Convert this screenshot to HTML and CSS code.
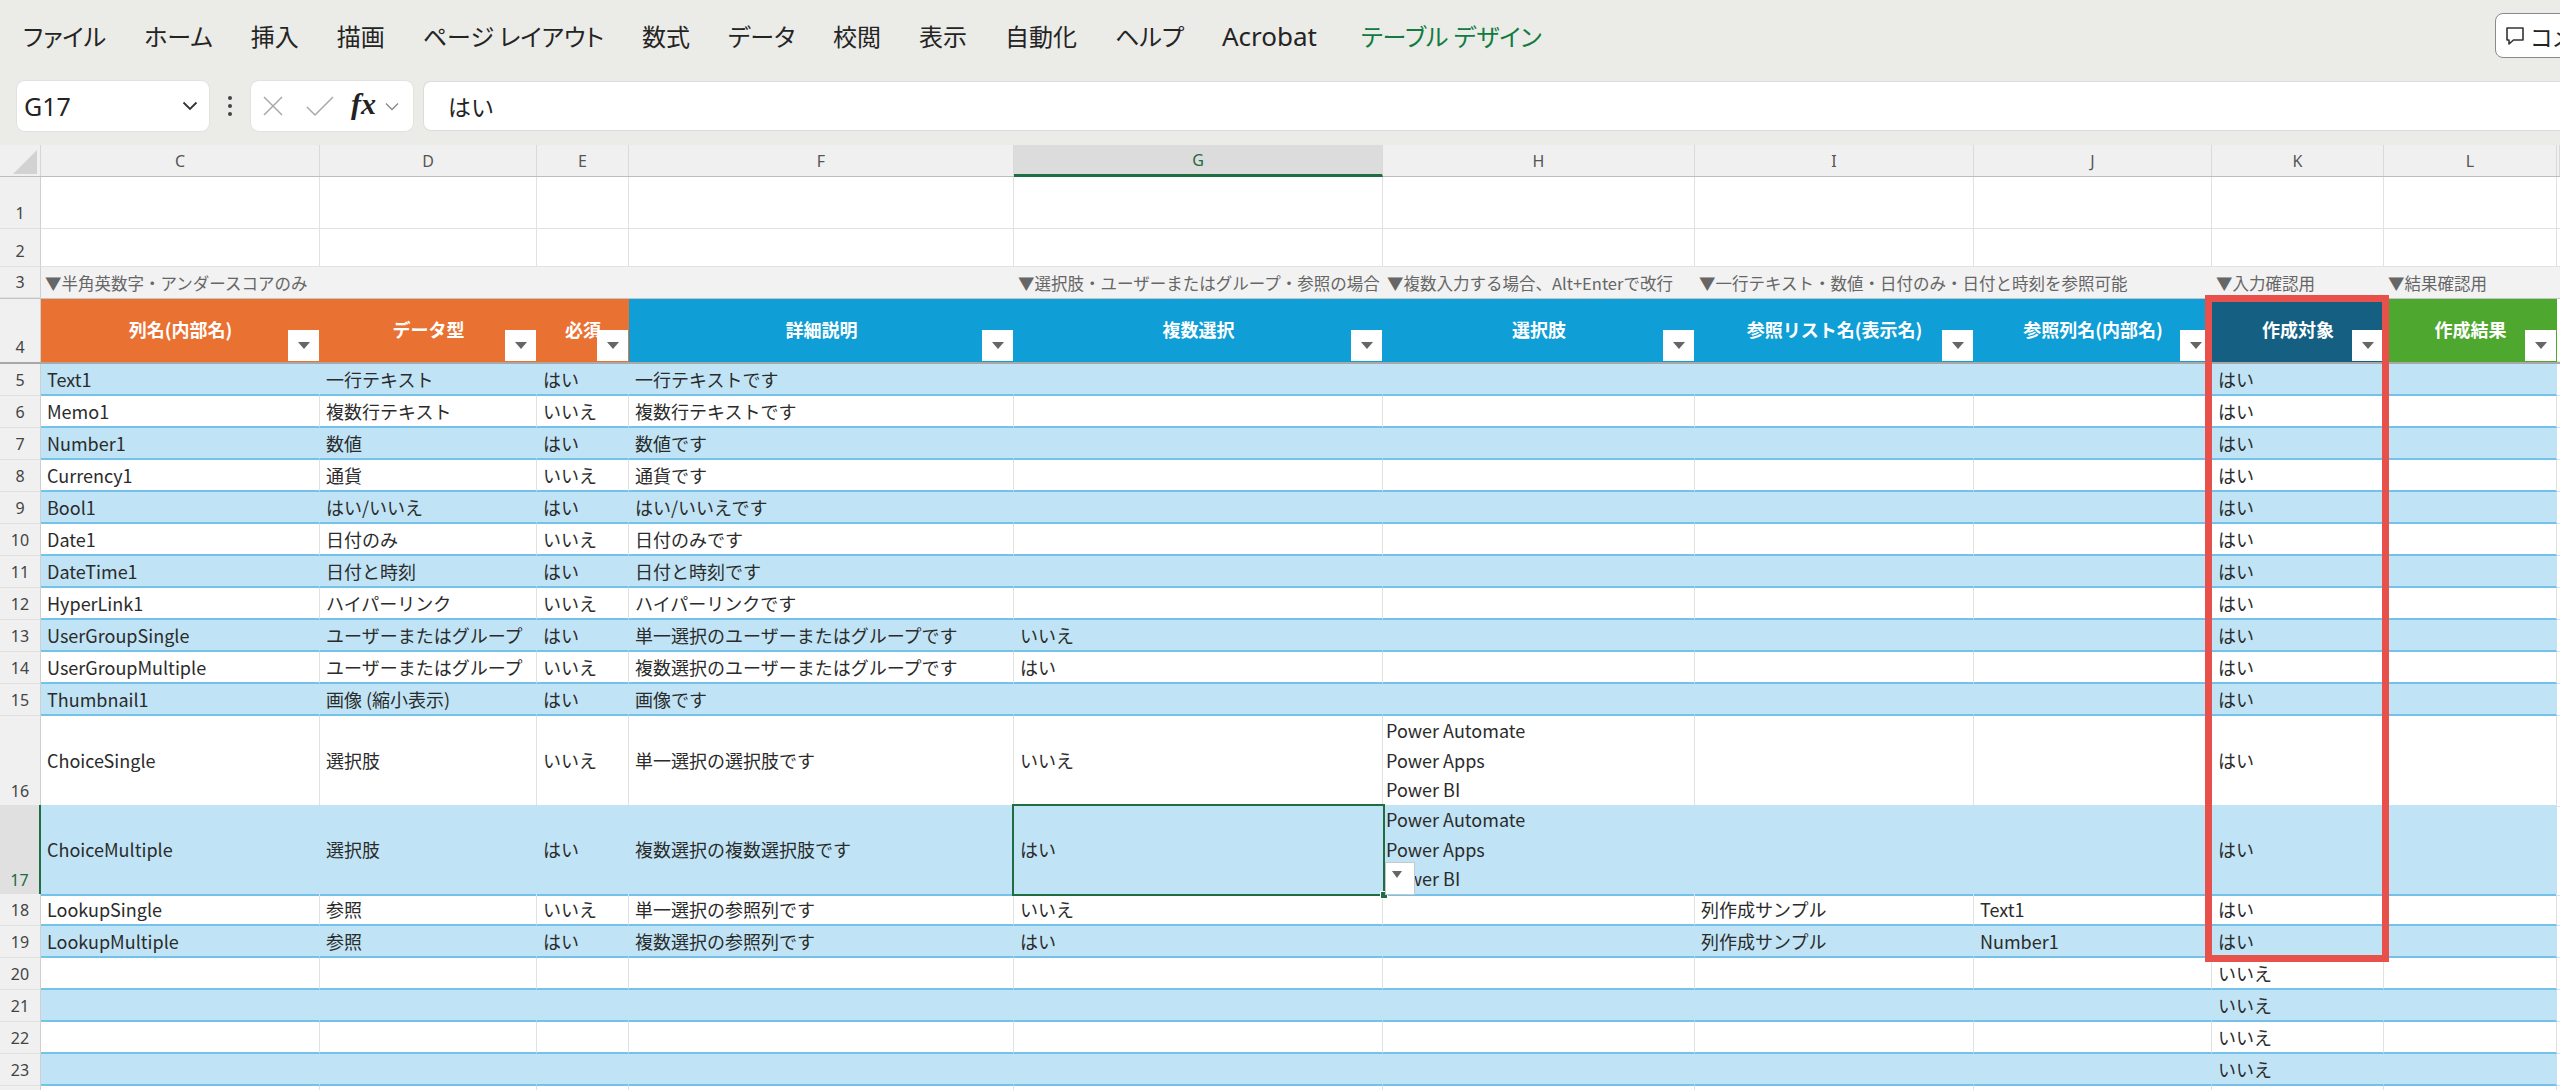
FILE: index.html
```html
<!DOCTYPE html>
<html lang="ja">
<head>
<meta charset="utf-8">
<title>Excel</title>
<link rel="stylesheet" href="styles.css">
</head>
<body>
<div class="menubar">
  <nav class="tabs">
    <span class="tab">ファイル</span>
    <span class="tab">ホーム</span>
    <span class="tab">挿入</span>
    <span class="tab">描画</span>
    <span class="tab">ページ レイアウト</span>
    <span class="tab">数式</span>
    <span class="tab">データ</span>
    <span class="tab">校閲</span>
    <span class="tab">表示</span>
    <span class="tab">自動化</span>
    <span class="tab">ヘルプ</span>
    <span class="tab latin">Acrobat</span>
    <span class="tab accent">テーブル デザイン</span>
  </nav>
  <div class="comment">
    <svg class="cmt-icon" width="22" height="22" viewBox="0 0 22 22"><path d="M3 3h16v12H9.5L5 19v-4H3z" fill="none" stroke="#333" stroke-width="1.6" stroke-linejoin="round"/></svg>
    <span>コメント</span>
  </div>
</div>

<div class="formulabar">
  <div class="namebox">
    <span class="ref">G17</span>
    <svg width="16" height="10" viewBox="0 0 16 10"><path d="M1.5 1.5l6.5 6.5 6.5-6.5" fill="none" stroke="#333" stroke-width="1.8"/></svg>
  </div>
  <div class="dots"><i></i><i></i><i></i></div>
  <div class="fxbox">
    <svg class="ic-x" width="24" height="24" viewBox="0 0 24 24"><path d="M3 3l18 18M21 3L3 21" stroke="#a8a8a8" stroke-width="1.5"/></svg>
    <svg class="ic-ok" width="30" height="24" viewBox="0 0 30 24"><path d="M2 13l8 8L28 3" fill="none" stroke="#a8a8a8" stroke-width="1.5"/></svg>
    <span class="fx">fx</span>
    <svg class="ic-dd" width="14" height="9" viewBox="0 0 14 9"><path d="M1 1.5l6 6 6-6" fill="none" stroke="#8a8a8a" stroke-width="1.4"/></svg>
  </div>
  <div class="formula">はい</div>
</div>

<div class="sheet">
  <div class="row colhdr">
    <div class="corner"><span class="tri"></span></div>
    <div class="ch">C</div><div class="ch">D</div><div class="ch">E</div><div class="ch">F</div>
    <div class="ch sel">G</div><div class="ch">H</div><div class="ch">I</div><div class="ch">J</div>
    <div class="ch">K</div><div class="ch">L</div><div class="ch"></div>
  </div>

  <div class="row r1">
    <div class="rh">1</div>
    <div class="c"></div><div class="c"></div><div class="c"></div><div class="c"></div><div class="c"></div><div class="c"></div><div class="c"></div><div class="c"></div><div class="c"></div><div class="c"></div><div class="c"></div>
  </div>
  <div class="row r2">
    <div class="rh">2</div>
    <div class="c"></div><div class="c"></div><div class="c"></div><div class="c"></div><div class="c"></div><div class="c"></div><div class="c"></div><div class="c"></div><div class="c"></div><div class="c"></div><div class="c"></div>
  </div>
  <div class="row r3 notes">
    <div class="rh">3</div>
    <div class="n">▼半角英数字・アンダースコアのみ</div><div class="n"></div><div class="n"></div><div class="n"></div>
    <div class="n">▼選択肢・ユーザーまたはグループ・参照の場合</div>
    <div class="n">▼複数入力する場合、Alt+Enterで改行</div>
    <div class="n">▼一行テキスト・数値・日付のみ・日付と時刻を参照可能</div>
    <div class="n"></div>
    <div class="n">▼入力確認用</div>
    <div class="n">▼結果確認用</div>
    <div class="n"></div>
  </div>
  <div class="row r4 thead">
    <div class="rh">4</div>
    <div class="hc or">列名(内部名)<span class="fb"></span></div>
    <div class="hc or">データ型<span class="fb"></span></div>
    <div class="hc or">必須<span class="fb"></span></div>
    <div class="hc bl">詳細説明<span class="fb"></span></div>
    <div class="hc bl">複数選択<span class="fb"></span></div>
    <div class="hc bl">選択肢<span class="fb"></span></div>
    <div class="hc bl">参照リスト名(表示名)<span class="fb"></span></div>
    <div class="hc bl">参照列名(内部名)<span class="fb"></span></div>
    <div class="hc dk">作成対象<span class="fb"></span></div>
    <div class="hc gr">作成結果<span class="fb"></span></div>
    <div class="c"></div>
  </div>

  <div class="row tr band">
    <div class="rh">5</div>
    <div class="c">Text1</div><div class="c">一行テキスト</div><div class="c">はい</div><div class="c">一行テキストです</div><div class="c"></div><div class="c"></div><div class="c"></div><div class="c"></div><div class="c">はい</div><div class="c"></div><div class="m"></div>
  </div>
  <div class="row tr">
    <div class="rh">6</div>
    <div class="c">Memo1</div><div class="c">複数行テキスト</div><div class="c">いいえ</div><div class="c">複数行テキストです</div><div class="c"></div><div class="c"></div><div class="c"></div><div class="c"></div><div class="c">はい</div><div class="c"></div><div class="m"></div>
  </div>
  <div class="row tr band">
    <div class="rh">7</div>
    <div class="c">Number1</div><div class="c">数値</div><div class="c">はい</div><div class="c">数値です</div><div class="c"></div><div class="c"></div><div class="c"></div><div class="c"></div><div class="c">はい</div><div class="c"></div><div class="m"></div>
  </div>
  <div class="row tr">
    <div class="rh">8</div>
    <div class="c">Currency1</div><div class="c">通貨</div><div class="c">いいえ</div><div class="c">通貨です</div><div class="c"></div><div class="c"></div><div class="c"></div><div class="c"></div><div class="c">はい</div><div class="c"></div><div class="m"></div>
  </div>
  <div class="row tr band">
    <div class="rh">9</div>
    <div class="c">Bool1</div><div class="c">はい/いいえ</div><div class="c">はい</div><div class="c">はい/いいえです</div><div class="c"></div><div class="c"></div><div class="c"></div><div class="c"></div><div class="c">はい</div><div class="c"></div><div class="m"></div>
  </div>
  <div class="row tr">
    <div class="rh">10</div>
    <div class="c">Date1</div><div class="c">日付のみ</div><div class="c">いいえ</div><div class="c">日付のみです</div><div class="c"></div><div class="c"></div><div class="c"></div><div class="c"></div><div class="c">はい</div><div class="c"></div><div class="m"></div>
  </div>
  <div class="row tr band">
    <div class="rh">11</div>
    <div class="c">DateTime1</div><div class="c">日付と時刻</div><div class="c">はい</div><div class="c">日付と時刻です</div><div class="c"></div><div class="c"></div><div class="c"></div><div class="c"></div><div class="c">はい</div><div class="c"></div><div class="m"></div>
  </div>
  <div class="row tr">
    <div class="rh">12</div>
    <div class="c">HyperLink1</div><div class="c">ハイパーリンク</div><div class="c">いいえ</div><div class="c">ハイパーリンクです</div><div class="c"></div><div class="c"></div><div class="c"></div><div class="c"></div><div class="c">はい</div><div class="c"></div><div class="m"></div>
  </div>
  <div class="row tr band">
    <div class="rh">13</div>
    <div class="c">UserGroupSingle</div><div class="c">ユーザーまたはグループ</div><div class="c">はい</div><div class="c">単一選択のユーザーまたはグループです</div><div class="c">いいえ</div><div class="c"></div><div class="c"></div><div class="c"></div><div class="c">はい</div><div class="c"></div><div class="m"></div>
  </div>
  <div class="row tr">
    <div class="rh">14</div>
    <div class="c">UserGroupMultiple</div><div class="c">ユーザーまたはグループ</div><div class="c">いいえ</div><div class="c">複数選択のユーザーまたはグループです</div><div class="c">はい</div><div class="c"></div><div class="c"></div><div class="c"></div><div class="c">はい</div><div class="c"></div><div class="m"></div>
  </div>
  <div class="row tr band">
    <div class="rh">15</div>
    <div class="c">Thumbnail1</div><div class="c">画像 (縮小表示)</div><div class="c">はい</div><div class="c">画像です</div><div class="c"></div><div class="c"></div><div class="c"></div><div class="c"></div><div class="c">はい</div><div class="c"></div><div class="m"></div>
  </div>
  <div class="row tr tall">
    <div class="rh">16</div>
    <div class="c">ChoiceSingle</div><div class="c">選択肢</div><div class="c">いいえ</div><div class="c">単一選択の選択肢です</div><div class="c">いいえ</div>
    <div class="c multi">Power Automate<br>Power Apps<br>Power BI</div>
    <div class="c"></div><div class="c"></div><div class="c">はい</div><div class="c"></div><div class="m"></div>
  </div>
  <div class="row tr tall band">
    <div class="rh sel">17</div>
    <div class="c">ChoiceMultiple</div><div class="c">選択肢</div><div class="c">はい</div><div class="c">複数選択の複数選択肢です</div><div class="c">はい</div>
    <div class="c multi">Power Automate<br>Power Apps<br>Power BI</div>
    <div class="c"></div><div class="c"></div><div class="c">はい</div><div class="c"></div><div class="m"></div>
  </div>
  <div class="row tr">
    <div class="rh">18</div>
    <div class="c">LookupSingle</div><div class="c">参照</div><div class="c">いいえ</div><div class="c">単一選択の参照列です</div><div class="c">いいえ</div><div class="c"></div><div class="c">列作成サンプル</div><div class="c">Text1</div><div class="c">はい</div><div class="c"></div><div class="m"></div>
  </div>
  <div class="row tr band">
    <div class="rh">19</div>
    <div class="c">LookupMultiple</div><div class="c">参照</div><div class="c">はい</div><div class="c">複数選択の参照列です</div><div class="c">はい</div><div class="c"></div><div class="c">列作成サンプル</div><div class="c">Number1</div><div class="c">はい</div><div class="c"></div><div class="m"></div>
  </div>
  <div class="row tr">
    <div class="rh">20</div>
    <div class="c"></div><div class="c"></div><div class="c"></div><div class="c"></div><div class="c"></div><div class="c"></div><div class="c"></div><div class="c"></div><div class="c">いいえ</div><div class="c"></div><div class="m"></div>
  </div>
  <div class="row tr band">
    <div class="rh">21</div>
    <div class="c"></div><div class="c"></div><div class="c"></div><div class="c"></div><div class="c"></div><div class="c"></div><div class="c"></div><div class="c"></div><div class="c">いいえ</div><div class="c"></div><div class="m"></div>
  </div>
  <div class="row tr">
    <div class="rh">22</div>
    <div class="c"></div><div class="c"></div><div class="c"></div><div class="c"></div><div class="c"></div><div class="c"></div><div class="c"></div><div class="c"></div><div class="c">いいえ</div><div class="c"></div><div class="m"></div>
  </div>
  <div class="row tr band">
    <div class="rh">23</div>
    <div class="c"></div><div class="c"></div><div class="c"></div><div class="c"></div><div class="c"></div><div class="c"></div><div class="c"></div><div class="c"></div><div class="c">いいえ</div><div class="c"></div><div class="m"></div>
  </div>
  <div class="row tr">
    <div class="rh"></div>
    <div class="c"></div><div class="c"></div><div class="c"></div><div class="c"></div><div class="c"></div><div class="c"></div><div class="c"></div><div class="c"></div><div class="c"></div><div class="c"></div><div class="m"></div>
  </div>

  <div class="selection"><span class="handle"></span></div>
  <div class="dv-button"></div>
  <div class="highlight"></div>
</div>
</body>
</html>
```

FILE: styles.css
```css
* { box-sizing: border-box; }
html, body { margin: 0; padding: 0; }
body {
  width: 2560px;
  height: 1090px;
  overflow: hidden;
  background: #ffffff;
  font-family: "Noto Sans CJK JP", "Noto Sans", sans-serif;
  color: #242424;
}

/* ---------- ribbon tabs ---------- */
.menubar {
  height: 72px;
  background: #ebebe7;
  display: flex;
  align-items: center;
  padding-left: 23px;
  overflow: hidden;
}
.tabs {
  display: flex;
  gap: 38px;
  font-size: 24px;
  font-feature-settings: "palt";
  flex: 1;
  white-space: nowrap;
  margin-top: -1px;
}
.tab { color: #242424; }
.tab.latin { font-family: "Noto Sans", "Noto Sans CJK JP", sans-serif; font-size: 26px; }
.tab.accent { color: #107c41; margin-left: 6px; }
.comment {
  flex-shrink: 0;
  width: 150px;
  height: 45px;
  margin-right: -85px;
  background: #ffffff;
  border: 1px solid #8a8a8a;
  border-radius: 8px;
  display: flex;
  align-items: center;
  gap: 5px;
  padding-left: 8px;
  font-size: 23px;
  font-feature-settings: "palt";
  margin-top: -1px;
}

/* ---------- formula bar ---------- */
.formulabar {
  height: 73px;
  background: #ebebe7;
  display: flex;
  align-items: flex-start;
  padding: 9px 0 0 17px;
}
.namebox {
  width: 192px;
  height: 50px;
  background: #ffffff;
  border-radius: 8px;
  display: flex;
  align-items: center;
  justify-content: space-between;
  padding: 0 11px 0 7px;
  box-shadow: 0 0 0 1px #e2e2e0;
}
.ref {
  font-family: "Noto Sans", sans-serif;
  font-size: 25px;
  color: #242424;
}
.dots {
  width: 42px;
  height: 50px;
  display: flex;
  flex-direction: column;
  align-items: center;
  justify-content: center;
  gap: 4px;
}
.dots i {
  display: block;
  width: 4px;
  height: 4px;
  border-radius: 50%;
  background: #444;
}
.fxbox {
  width: 162px;
  height: 50px;
  background: #ffffff;
  border-radius: 8px;
  display: flex;
  align-items: center;
  padding-left: 10px;
  box-shadow: 0 0 0 1px #e2e2e0;
}
.ic-ok { margin-left: 20px; }
.fx {
  font-family: "Liberation Serif", serif;
  font-style: italic;
  font-weight: bold;
  font-size: 30px;
  line-height: 1;
  color: #222;
  margin-left: 16px;
  margin-top: -4px;
}
.ic-dd { margin-left: 9px; }
.formula {
  flex: 1;
  margin-left: 10px;
  height: 50px;
  background: #ffffff;
  border-radius: 8px 0 0 8px;
  border-top: 1px solid #dcdcda;
  border-bottom: 1px solid #dcdcda;
  border-left: 1px solid #dcdcda;
  padding-left: 24px;
  display: flex;
  align-items: center;
  font-size: 23px;
}

/* ---------- sheet ---------- */
.sheet {
  position: relative;
}
.row {
  display: grid;
  grid-template-columns: 41px 279px 217px 92px 385px 369px 312px 279px 238px 172px 173px 1fr;
  height: 32px;
}
.colhdr {
  background: #f0f0f0;
  border-bottom: 1px solid #bdbdbd;
  font-family: "Noto Sans", sans-serif;
  font-size: 16px;
  color: #555;
}
.corner {
  position: relative;
  border-right: 1px solid #d6d6d6;
}
.tri {
  position: absolute;
  right: 3px;
  bottom: 2px;
  width: 0;
  height: 0;
  border-left: 24px solid transparent;
  border-bottom: 24px solid #d2d2d2;
}
.ch {
  display: flex;
  align-items: center;
  justify-content: center;
  border-right: 1px solid #dadada;
}
.ch.sel {
  background: #dcdcdc;
  color: #1e6b41;
  border-bottom: 3px solid #1f6e43;
  margin-bottom: -1px;
}

.rh {
  background: #f0f0f0;
  border-right: 1px solid #cfcfcf;
  border-bottom: 1px solid #e0e0e0;
  display: flex;
  align-items: flex-end;
  justify-content: center;
  padding-bottom: 3px;
  font-family: "Noto Sans", sans-serif;
  font-size: 16px;
  line-height: 24px;
  color: #444;
}
.rh.sel {
  background: #e0e0e0;
  color: #1e6b41;
  border-right: 2px solid #1f6e43;
}

.c {
  border-right: 1px solid #e1e1e1;
  border-bottom: 1px solid #e1e1e1;
  padding: 0 6px;
  display: flex;
  align-items: center;
  white-space: nowrap;
  font-size: 18px;
  color: #2b2b2b;
  min-width: 0;
}
.m { border-bottom: 1px solid #e1e1e1; }

.r1 { height: 52px; }
.r2 { height: 38px; }

.notes {
  background: #f2f2f2;
  border-bottom: 1px solid #c4c4c4;
}
.n {
  display: flex;
  align-items: center;
  white-space: nowrap;
  padding-left: 4px;
  font-size: 16.5px;
  color: #666;
}

.thead {
  height: 65px;
  border-bottom: 2px solid #a8a8a8;
}
.thead .rh { border-bottom: 0; }
.hc {
  position: relative;
  display: flex;
  align-items: center;
  justify-content: center;
  color: #ffffff;
  font-weight: bold;
  font-size: 18px;
  white-space: nowrap;
  padding-bottom: 3px;
}
.hc.or { background: #e97132; }
.hc.bl { background: #0f9ed5; }
.hc.dk { background: #156082; }
.hc.gr { background: #4ea72e; }
.fb {
  position: absolute;
  right: 1px;
  bottom: 1px;
  width: 31px;
  height: 31px;
  background: #ffffff;
  display: flex;
  align-items: center;
  justify-content: center;
}
.fb::after {
  content: "";
  width: 0;
  height: 0;
  border-left: 6px solid transparent;
  border-right: 6px solid transparent;
  border-top: 7px solid #666;
}

/* table body rows */
.tr .c {
  border-bottom: 2px solid #74c2ea;
}
.tr .rh { border-bottom: 1px solid #e0e0e0; }
.band .c {
  background: #c0e4f5;
  border-right-color: #c0e4f5;
}
.tall { height: 89px; }
.multi {
  flex-direction: column;
  align-items: flex-start;
  justify-content: center;
  line-height: 29.5px;
  padding-left: 3px;
}

/* overlays */
.selection {
  position: absolute;
  left: 1012px;
  top: 659px;
  width: 373px;
  height: 92px;
  border: 2px solid #1f6e43;
}
.handle {
  position: absolute;
  right: -5px;
  bottom: -5px;
  width: 8px;
  height: 8px;
  background: #1f6e43;
  border: 1px solid #ffffff;
}
.dv-button {
  position: absolute;
  left: 1385px;
  top: 717px;
  width: 30px;
  height: 33px;
  background: #ffffff;
  border: 1px solid #c8c8c8;
  display: flex;
  align-items: center;
  justify-content: center;
}
.dv-button::after {
  content: "";
  border-left: 5px solid transparent;
  border-right: 5px solid transparent;
  border-top: 7px solid #666;
  margin-top: -8px;
  margin-left: -6px;
}
.highlight {
  position: absolute;
  left: 2205px;
  top: 150px;
  width: 184px;
  height: 667px;
  border: 7px solid #e8504c;
}
```
